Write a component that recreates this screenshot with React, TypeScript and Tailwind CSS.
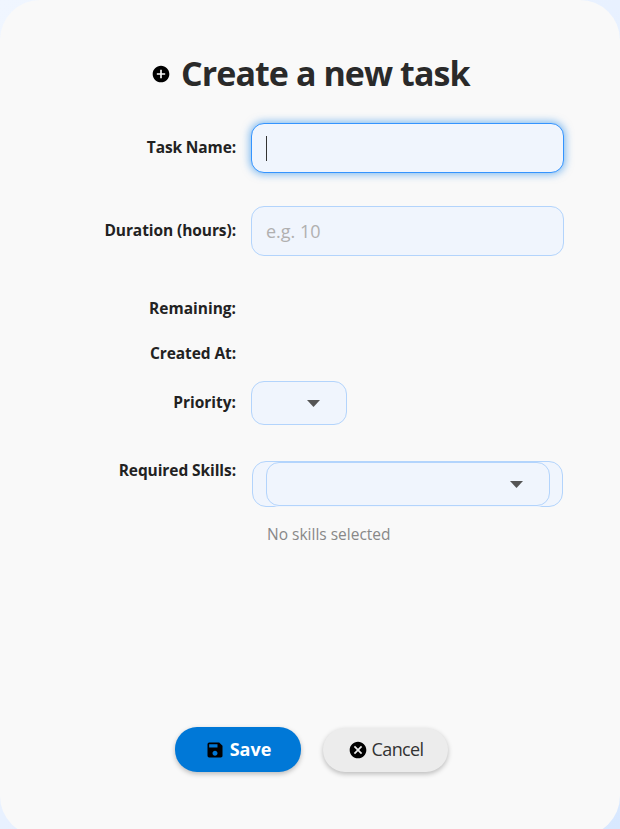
import { MdAddCircle, MdCancel, MdSave } from "react-icons/md";
import type { ReactNode } from "react";

function Row({ label, className, labelClass, children }: { label: string; className: string; labelClass: string; children?: ReactNode }) {
  return (
    <div className={`flex gap-[15px] ${className}`}>
      <div className="flex w-[236px] shrink-0 justify-end pb-[2px] text-[15.5px] leading-5 font-bold text-[#222]">
        <span className={`whitespace-nowrap ${labelClass}`}>{label}</span>
      </div>
      {children}
    </div>
  );
}

function Arrow() {
  return (
    <svg width="13" height="7" viewBox="0 0 13 7" className="shrink-0">
      <path d="M0 0h13L6.5 7z" fill="#555" />
    </svg>
  );
}

export default function App() {
  return (
    <div className="h-[829px] w-[620px] overflow-hidden bg-linear-to-br from-[#f0f6ff] via-[#e8f1ff] to-[#d8e8ff] font-['Open_Sans','Noto_Sans',sans-serif]">
      <main className="flex h-[836px] flex-col rounded-[40px] bg-[#f9f9f9] pt-[50px]">
        <div className="flex h-[48px] items-center pl-[151px]">
          <MdAddCircle className="size-5 shrink-0 text-black" />
          <h1 className="ml-[10px] pb-[2px] text-[34px] leading-[46px] font-bold tracking-[-0.93px] whitespace-nowrap text-[#2a2a2a]">Create a new task</h1>
        </div>
        <form className="flex flex-col">
          <Row label="Task Name:" className="mt-[25px] h-[50px] items-center" labelClass="tracking-[-0.13px]">
            <div className="flex h-[50px] w-[313px] items-center rounded-[13px] border border-[#3494ff] bg-[#f0f5fd] pl-[14px] shadow-[0_0_8px_1px_rgba(0,120,230,0.55)]">
              <span className="h-[25px] w-px bg-[#333]" />
            </div>
          </Row>
          <Row label="Duration (hours):" className="mt-[33px] h-[50px] items-center" labelClass="tracking-[-0.08px]">
            <input
              placeholder="e.g. 10"
              className="h-[50px] w-[313px] rounded-[13px] border border-[#b3d4fc] bg-[#f0f5fd] px-[14px] text-[18px] outline-none placeholder:text-[#b0b0b0]"
            />
          </Row>
          <Row label="Remaining:" className="mt-[42px] h-[21px]" labelClass="" />
          <Row label="Created At:" className="mt-[24px] h-[21px]" labelClass="tracking-[-0.08px]" />
          <Row label="Priority:" className="mt-[17px] h-[44px] items-center" labelClass="">
            <div className="flex h-[44px] w-[96px] items-center justify-end rounded-[13px] border border-[#b3d4fc] bg-[#f0f5fd] pr-[26px]">
              <Arrow />
            </div>
          </Row>
          <Row label="Required Skills:" className="mt-[36px] h-[84px] items-start" labelClass="-mt-px tracking-[-0.08px]">
            <div className="ml-px flex w-[311px] flex-col">
              <div className="h-[46px] rounded-[14px] border border-[#b3d4fc] bg-[#f0f5fd] pr-[12px] pl-[13px]">
                <div className="flex h-[44px] items-center justify-end rounded-[13px] border border-[#b3d4fc] bg-[#f0f5fd] pr-[26px] shadow-[0_1px_0_0_#f0f5fd]">
                  <Arrow />
                </div>
              </div>
              <p className="mt-[17px] pl-[15px] text-[15.5px] leading-5 text-[#888]">No skills selected</p>
            </div>
          </Row>
        </form>
        <div className="mt-[182px] flex gap-[22px] pl-[175px]">
          <button className="flex h-[45px] w-[126px] items-center justify-center gap-[5px] rounded-[22px] bg-[#0078d7] text-[18px] font-bold text-white shadow-[0_2px_5px_rgba(0,0,0,0.25)]">
            <MdSave className="size-5 text-black" />
            <span>Save</span>
          </button>
          <button className="mt-px flex h-[44px] w-[125px] items-center justify-center gap-[4px] rounded-[22px] bg-[#ececec] text-[18px] tracking-[-0.65px] text-[#333] shadow-[0_2px_5px_rgba(0,0,0,0.25)]">
            <MdCancel className="size-5 text-black" />
            <span className="pb-px">Cancel</span>
          </button>
        </div>
      </main>
    </div>
  );
}
